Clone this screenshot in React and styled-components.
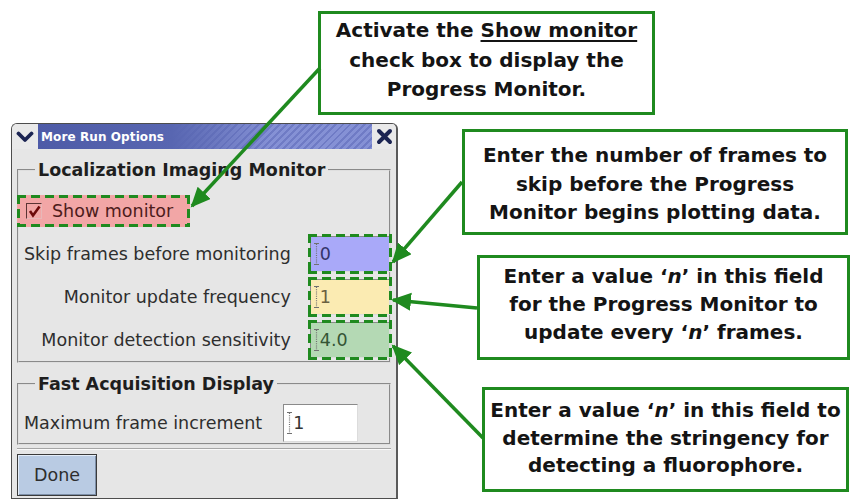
import React from 'react';
import styled, { createGlobalStyle, css } from 'styled-components';

const Global = createGlobalStyle`
  html, body { margin: 0; padding: 0; background: #fff; }
  body { width: 852px; height: 499px; overflow: hidden; }
`;

const GREEN = '#1f8a1f';

const dashFrame = css`
  &::after {
    content: '';
    position: absolute;
    inset: ${p => p.$inset ?? 0}px;
    pointer-events: none;
    background:
      linear-gradient(90deg, ${GREEN} 9px, transparent 9px) top left / 14px 3px repeat-x,
      linear-gradient(90deg, ${GREEN} 9px, transparent 9px) bottom left / 14px 3px repeat-x,
      linear-gradient(180deg, ${GREEN} 9px, transparent 9px) top left / 3px 14px repeat-y,
      linear-gradient(180deg, ${GREEN} 9px, transparent 9px) top right / 3px 14px repeat-y;
  }
`;

const Canvas = styled.div`
  position: relative;
  width: 852px;
  height: 499px;
  box-sizing: border-box;
  padding: 123px 0 0 11px;
  overflow: hidden;
  font-family: "DejaVu Sans", "Liberation Sans", sans-serif;
`;

const Window = styled.div`
  width: 387px;
  height: 376px;
  box-sizing: border-box;
  background: #e6e6e6;
  border: 1px solid #4d4d4d;
  border-right: 2px solid #5a5a5a;
  border-radius: 6px 6px 0 0;
  overflow: hidden;
  display: flex;
  flex-direction: column;
`;

const TitleBar = styled.div`
  display: flex;
  height: 25px;
  flex: none;
`;

const TitleButton = styled.div`
  width: ${p => p.$w}px;
  flex: none;
  display: flex;
  align-items: center;
  justify-content: center;
  background: #e9e9e9;
  color: #1b2452;
`;

const TitleBlue = styled.div`
  flex: 1;
  display: flex;
  align-items: center;
  padding-left: 3px;
  background:
    linear-gradient(90deg, #4e5ba7 0%, #5866b1 40%, rgba(100, 112, 190, 0) 70%),
    repeating-linear-gradient(135deg, #6f7bc5 0 2px, #8591d5 2px 5px);
  color: #fff;
  font-weight: bold;
  font-size: 12px;
  letter-spacing: 0.1px;
`;

const Body = styled.div`
  padding: 0 5px;
  display: flex;
  flex-direction: column;
`;

const Group = styled.fieldset`
  margin: ${p => p.$mt}px 0 0;
  padding: 0 0 ${p => p.$pb}px 5px;
  border: 2px groove #dedede;
  min-width: 0;
`;

const Legend = styled.legend`
  margin-left: 11px;
  padding: 0 3px;
  font-size: 17.5px;
  line-height: 20px;
  font-weight: bold;
  color: #1e1e1e;
`;

const Highlight = styled.div`
  position: relative;
  display: flex;
  align-items: center;
  gap: 10px;
  width: 173px;
  height: 32px;
  box-sizing: border-box;
  margin: 15px 0 0 -7px;
  padding-left: 9px;
  background: #f2a6a6;
  color: #4d1c1c;
  font-size: 17.5px;
  ${dashFrame}
`;

const CheckBox = styled.span`
  width: 16px;
  height: 16px;
  box-sizing: border-box;
  flex: none;
  border: 1.5px solid;
  border-color: #5a3434 #e8b8b8 #e8b8b8 #5a3434;
  display: flex;
  align-items: center;
  justify-content: center;
`;

const Form = styled.div`
  display: grid;
  grid-template-columns: 1fr 80px;
  column-gap: 19px;
  grid-auto-rows: 43px;
  align-items: center;
  margin-top: 5px;
`;

const Label = styled.span`
  text-align: ${p => (p.$left ? 'left' : 'right')};
  font-size: 17.5px;
  color: #2e2e2e;
  white-space: nowrap;
`;

const Field = styled.div`
  position: relative;
  height: ${p => p.$h}px;
  box-sizing: border-box;
  display: flex;
  align-items: center;
  gap: 1px;
  padding-left: 3px;
  background: ${p => p.$bg};
  border: 1px solid;
  border-color: #8a8a8a #dcdcdc #dcdcdc #8a8a8a;
  color: ${p => p.$fg};
  font-size: 17.5px;
  ${p => p.$annot && dashFrame}
`;

const Row = styled.div`
  display: grid;
  grid-template-columns: auto 75px;
  column-gap: 21px;
  justify-content: start;
  align-items: center;
  margin-top: 10px;
`;

const Separator = styled.div`
  margin-top: 3px;
  border-top: 1px solid #a6a6a6;
  border-bottom: 1px solid #fafafa;
`;

const Button = styled.button`
  margin-top: 4px;
  width: 80px;
  height: 42px;
  background: #b9cbe3;
  border: 1px solid #3a3a3a;
  box-shadow: inset 1px 1px 0 #e4edf8, inset -1px -1px 0 #7d8fa8;
  font-family: inherit;
  font-size: 17.5px;
  color: #2e2e2e;
  padding: 0;
`;

const Callout = styled.div`
  position: absolute;
  left: ${p => p.$x}px;
  top: ${p => p.$y}px;
  width: ${p => p.$w}px;
  height: ${p => p.$h}px;
  box-sizing: border-box;
  border: 3px solid ${GREEN};
  background: #fff;
  padding-top: ${p => p.$pt}px;
  font-weight: bold;
  font-size: 20px;
  line-height: ${p => p.$lh}px;
  color: #141414;
  text-align: center;
  z-index: 2;
`;

const Line = styled.div`
  white-space: nowrap;
`;

const Under = styled.span`
  text-decoration: underline;
  text-decoration-thickness: 2px;
  text-underline-offset: 3px;
`;

const Arrows = styled.svg`
  position: absolute;
  left: 0;
  top: 0;
  width: 852px;
  height: 499px;
  pointer-events: none;
  z-index: 3;
`;

const Caret = () => (
  <svg width="5" height="24" viewBox="0 0 5 24">
    <path d="M0 1.5h5M0 22.5h5" stroke="#707070" strokeWidth="1.2" />
    <path d="M2.5 2v20" stroke="#707070" strokeWidth="1.2" strokeDasharray="1 1.2" />
  </svg>
);

const Q = ({ children }) => (
  <>‘<i>{children}</i>’</>
);

const arrows = [
  [320, 68, 192, 206],
  [462, 182, 393, 262],
  [477, 308, 393, 300],
  [483, 438, 393, 346],
];

export default function App() {
  return (
    <>
      <Global />
      <Canvas>
        <Window>
          <TitleBar>
            <TitleButton $w={26}>
              <svg width="18" height="12" viewBox="0 0 18 12">
                <path d="M2.5 2.5 L9 9 L15.5 2.5" fill="none" stroke="currentColor" strokeWidth="3.8" strokeLinecap="round" strokeLinejoin="round" />
              </svg>
            </TitleButton>
            <TitleBlue>More Run Options</TitleBlue>
            <TitleButton $w={24}>
              <svg width="17" height="17" viewBox="0 0 17 17">
                <path d="M3 3 L14 14 M14 3 L3 14" fill="none" stroke="currentColor" strokeWidth="4" strokeLinecap="round" />
              </svg>
            </TitleButton>
          </TitleBar>
          <Body>
            <Group $mt={11} $pb={0}>
              <Legend>Localization Imaging Monitor</Legend>
              <Highlight>
                <CheckBox>
                  <svg width="13" height="13" viewBox="0 0 13 13">
                    <path d="M2 6 L5 10.5 L11.5 1.5" fill="none" stroke="#6e0a0a" strokeWidth="2.6" />
                  </svg>
                </CheckBox>
                Show monitor
              </Highlight>
              <Form>
                <Label>Skip frames before monitoring</Label>
                <Field $h={36} $inset={-3} $bg="#a9a9f9" $fg="#34346a" $annot><Caret />0</Field>
                <Label>Monitor update frequency</Label>
                <Field $h={36} $inset={-3} $bg="#fbebb2" $fg="#6a6040" $annot><Caret />1</Field>
                <Label>Monitor detection sensitivity</Label>
                <Field $h={36} $inset={-3} $bg="#b4d9b4" $fg="#355535" $annot><Caret />4.0</Field>
              </Form>
            </Group>
            <Group $mt={11} $pb={1}>
              <Legend>Fast Acquisition Display</Legend>
              <Row>
                <Label $left>Maximum frame increment</Label>
                <Field $h={38} $bg="#ffffff" $fg="#333"><Caret />1</Field>
              </Row>
            </Group>
            <Separator />
            <div>
              <Button>Done</Button>
            </div>
          </Body>
        </Window>

        <Callout $x={318} $y={11} $w={337} $h={104} $pt={2} $lh={29.5}>
          <Line>Activate the <Under>Show monitor</Under></Line>
          <Line>check box to display the</Line>
          <Line>Progress Monitor.</Line>
        </Callout>
        <Callout $x={462} $y={129} $w={386} $h={106} $pt={9} $lh={28.5}>
          <Line>Enter the number of frames to</Line>
          <Line>skip before the Progress</Line>
          <Line>Monitor begins plotting data.</Line>
        </Callout>
        <Callout $x={477} $y={255} $w={373} $h={105} $pt={4} $lh={28}>
          <Line>Enter a value <Q>n</Q> in this field</Line>
          <Line>for the Progress Monitor to</Line>
          <Line>update every <Q>n</Q> frames.</Line>
        </Callout>
        <Callout $x={482} $y={387} $w={367} $h={105} $pt={7} $lh={27.5}>
          <Line>Enter a value <Q>n</Q> in this field to</Line>
          <Line>determine the stringency for</Line>
          <Line>detecting a fluorophore.</Line>
        </Callout>

        <Arrows viewBox="0 0 852 499">
          <defs>
            <marker id="head" markerUnits="userSpaceOnUse" markerWidth="22" markerHeight="20" refX="18" refY="9" orient="auto">
              <path d="M0 0 L20 9 L0 18 Z" fill={GREEN} />
            </marker>
          </defs>
          {arrows.map(([x1, y1, x2, y2], i) => (
            <line key={i} x1={x1} y1={y1} x2={x2} y2={y2} stroke={GREEN} strokeWidth="3.5" markerEnd="url(#head)" />
          ))}
        </Arrows>
      </Canvas>
    </>
  );
}
